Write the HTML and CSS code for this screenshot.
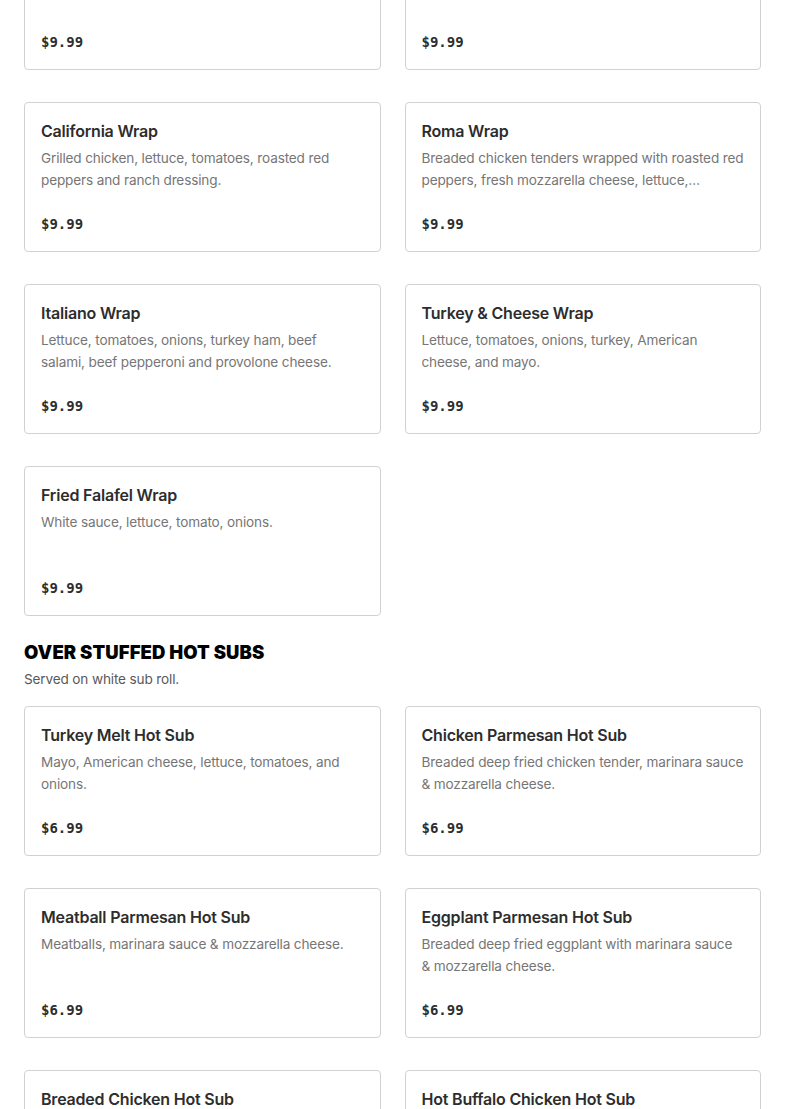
FILE: index.html
```html
<!DOCTYPE html>
<html lang="en">
<head>
<meta charset="utf-8">
<title>Menu</title>
<link rel="stylesheet" href="styles.css">
</head>
<body>
<main class="menu">
  <section class="section">
    <div class="grid">
      <article class="card">
        <h3 class="card-title">Chicken Caesar Wrap</h3>
        <p class="card-desc">Grilled chicken, romaine and caesar dressing.</p>
        <div class="card-price">$9.99</div>
      </article>
      <article class="card">
        <h3 class="card-title">Buffalo Chicken Wrap</h3>
        <p class="card-desc">Buffalo chicken, lettuce and ranch.</p>
        <div class="card-price">$9.99</div>
      </article>
      <article class="card">
        <h3 class="card-title">California Wrap</h3>
        <p class="card-desc">Grilled chicken, lettuce, tomatoes, roasted red peppers and ranch dressing.</p>
        <div class="card-price">$9.99</div>
      </article>
      <article class="card">
        <h3 class="card-title">Roma Wrap</h3>
        <p class="card-desc">Breaded chicken tenders wrapped with roasted red peppers, fresh mozzarella cheese, lettuce, tomatoes and balsamic vinaigrette.</p>
        <div class="card-price">$9.99</div>
      </article>
      <article class="card">
        <h3 class="card-title">Italiano Wrap</h3>
        <p class="card-desc">Lettuce, tomatoes, onions, turkey ham, beef salami, beef pepperoni and provolone cheese.</p>
        <div class="card-price">$9.99</div>
      </article>
      <article class="card">
        <h3 class="card-title">Turkey &amp; Cheese Wrap</h3>
        <p class="card-desc">Lettuce, tomatoes, onions, turkey, American cheese, and mayo.</p>
        <div class="card-price">$9.99</div>
      </article>
      <article class="card">
        <h3 class="card-title">Fried Falafel Wrap</h3>
        <p class="card-desc">White sauce, lettuce, tomato, onions.</p>
        <div class="card-price">$9.99</div>
      </article>
    </div>
  </section>

  <section class="section">
    <h2 class="section-title">OVER STUFFED HOT SUBS</h2>
    <p class="section-sub">Served on white sub roll.</p>
    <div class="grid">
      <article class="card">
        <h3 class="card-title">Turkey Melt Hot Sub</h3>
        <p class="card-desc">Mayo, American cheese, lettuce, tomatoes, and onions.</p>
        <div class="card-price">$6.99</div>
      </article>
      <article class="card">
        <h3 class="card-title">Chicken Parmesan Hot Sub</h3>
        <p class="card-desc">Breaded deep fried chicken tender, marinara sauce &amp; mozzarella cheese.</p>
        <div class="card-price">$6.99</div>
      </article>
      <article class="card">
        <h3 class="card-title">Meatball Parmesan Hot Sub</h3>
        <p class="card-desc">Meatballs, marinara sauce &amp; mozzarella cheese.</p>
        <div class="card-price">$6.99</div>
      </article>
      <article class="card">
        <h3 class="card-title">Eggplant Parmesan Hot Sub</h3>
        <p class="card-desc">Breaded deep fried eggplant with marinara sauce &amp; mozzarella cheese.</p>
        <div class="card-price">$6.99</div>
      </article>
      <article class="card">
        <h3 class="card-title">Breaded Chicken Hot Sub</h3>
        <p class="card-desc">Breaded chicken tenders, lettuce, tomatoes and mayo.</p>
        <div class="card-price">$6.99</div>
      </article>
      <article class="card">
        <h3 class="card-title">Hot Buffalo Chicken Hot Sub</h3>
        <p class="card-desc">Buffalo chicken tenders, lettuce, tomatoes and ranch dressing.</p>
        <div class="card-price">$6.99</div>
      </article>
    </div>
  </section>
</main>
</body>
</html>
```

FILE: styles.css
```css
* { box-sizing: border-box; }

html, body {
  margin: 0;
  padding: 0;
  background: #ffffff;
}

body {
  font-family: "Inter", "Liberation Sans", sans-serif;
  color: #2d2d2d;
}

.menu {
  padding: 0 24px;
  margin-top: -80px;
}

.grid {
  display: grid;
  grid-template-columns: 1fr 1fr;
  column-gap: 24px;
  row-gap: 32px;
}

.section + .section {
  margin-top: 24px;
}

.section-title {
  margin: 0;
  font-family: "Inter", "Liberation Sans", sans-serif;
  font-weight: 900;
  font-size: 18.5px;
  line-height: 24px;
  color: #000;
  letter-spacing: 0.1px;
}

.section-sub {
  margin: 4px 0 16px;
  font-size: 13.6px;
  line-height: 22px;
  letter-spacing: -0.15px;
  color: #595959;
}

.card {
  border: 1px solid #d2d2d2;
  border-radius: 4px;
  padding: 16px 16px 14px;
  height: 150px;
  display: flex;
  flex-direction: column;
}

.card-title {
  margin: 0;
  font-size: 16px;
  font-weight: 600;
  line-height: 24px;
  letter-spacing: -0.2px;
  color: #2d2d2d;
}

.card-desc {
  margin: 4px 0 0;
  font-size: 13.6px;
  line-height: 22px;
  letter-spacing: -0.15px;
  color: #767676;
  height: 44px;
  overflow: hidden;
  display: -webkit-box;
  -webkit-line-clamp: 2;
  -webkit-box-orient: vertical;
}

.card-price {
  margin-top: 21px;
  font-family: "DejaVu Sans Mono", "Liberation Mono", monospace;
  font-weight: 700;
  font-size: 14px;
  line-height: 24px;
  color: #2d2d2d;
}
```
